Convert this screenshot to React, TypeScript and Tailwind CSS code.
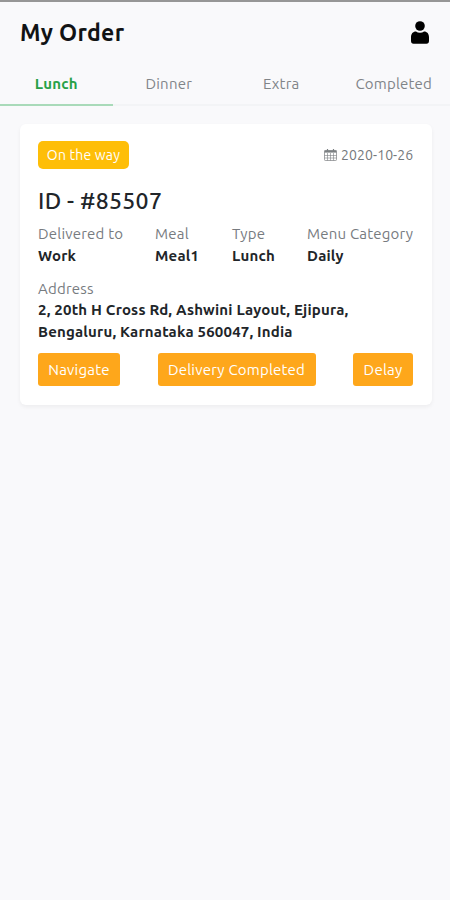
import { clsx } from 'clsx';

const tabs = ['Lunch', 'Dinner', 'Extra', 'Completed'];

const details = [
  { label: 'Delivered to', value: 'Work' },
  { label: 'Meal', value: 'Meal1' },
  { label: 'Type', value: 'Lunch' },
  { label: 'Menu Category', value: 'Daily' },
];

function PersonIcon() {
  return (
    <svg className="mb-px h-[23px] w-[18px]" viewBox="0 0 18 23" fill="#000" aria-hidden="true">
      <circle cx="9" cy="5" r="4.800" />
      <path d="M5 10.600C1.800 10.600 0 13 0 16.200v3.600c0 1.900.8 2.900 2.600 2.900h12.800c1.800 0 2.600-1 2.600-2.900v-3.600c0-3.200-1.800-5.600-5-5.600-1.100.8-2.400 1.200-4 1.200s-2.900-.4-4-1.200z" />
    </svg>
  );
}

function CalendarIcon() {
  return (
    <svg className="h-3 w-[13px]" viewBox="0 0 13 12" fill="none" stroke="#7c8083" aria-hidden="true">
      <rect x=".5" y="1.500" width="12" height="10" rx=".8" strokeWidth=".7" />
      <path d="M.5 2.500h12" strokeWidth="2.200" />
      <path d="M3.500 0v2.500M9.500 0v2.500" strokeWidth="1.200" />
      <path d="M.5 6.500h12M.5 9h12M3.500 4v7.500M6.500 4v7.500M9.500 4v7.500" strokeWidth=".6" />
    </svg>
  );
}

function ActionButton({ label, className }: { label: string; className: string }) {
  return (
    <button
      type="button"
      className={clsx('h-[33px] rounded-[3px] bg-[#fea71b] pt-0.5 text-center tracking-[0.2px] whitespace-nowrap text-white', className)}
    >
      {label}
    </button>
  );
}

function OrderCard() {
  return (
    <article className="mr-[18px] ml-5 h-[281px] rounded-md bg-white pt-[17px] pr-[19px] pl-[18px] shadow-[0_2px_4px_rgba(0,0,0,0.05)]">
      <div className="flex h-7 items-center justify-between">
        <span className="flex h-7 w-[91px] items-center justify-center rounded-[5px] bg-[#febe08] text-[14px] text-white">
          On the way
        </span>
        <span className="flex items-center gap-1 text-[14px] text-[#75797c]">
          <CalendarIcon />
          <time className="w-[72px] tracking-[0.1px] whitespace-nowrap">2020-10-26</time>
        </span>
      </div>

      <h2 className="mt-[18px] text-[23px] leading-7 font-medium tracking-[0.3px] text-[#212529]">ID - #85507</h2>

      <div className="mt-[8px] grid grid-cols-[117px_77px_75px_106px] leading-[22px]">
        {details.map((item) => (
          <div key={item.label}>
            <p className="whitespace-nowrap text-[#777b7f]">{item.label}</p>
            <p className="font-bold text-[#212529]">{item.value}</p>
          </div>
        ))}
      </div>

      <div className="mt-[11px]">
        <p className="leading-[21px] text-[#777b7f]">Address</p>
        <p className="leading-[22px] font-bold whitespace-nowrap text-[#212529]">
          2, 20th H Cross Rd, Ashwini Layout, Ejipura,
          <br />
          Bengaluru, Karnataka 560047, India
        </p>
      </div>

      <div className="mt-[10px] flex justify-between">
        <ActionButton label="Navigate" className="w-[82px]" />
        <ActionButton label="Delivery Completed" className="w-[158px]" />
        <ActionButton label="Delay" className="w-[60px]" />
      </div>
    </article>
  );
}

export default function App() {
  return (
    <div className="min-h-screen border-t-2 border-[#969696] bg-[#f9f9fb] font-['Ubuntu','Noto_Sans',sans-serif] text-[15px] tracking-[0.2px]">
      <header className="flex h-[62px] items-center justify-between pr-[21px] pl-5">
        <h1 className="text-[23px] leading-7 font-semibold tracking-[0.3px] text-[#111315]">My Order</h1>
        <PersonIcon />
      </header>

      <nav className="mb-[18px] grid h-[42px] grid-cols-4">
        {tabs.map((tab, index) => (
          <button
            key={tab}
            type="button"
            className={clsx(
              'border-b-2 tracking-[0.2px]',
              index === 0 ? 'border-[#a9dab9] font-bold text-[#27a148]' : 'border-[#f3f4f6] text-[#808488]',
            )}
          >
            {tab}
          </button>
        ))}
      </nav>

      <OrderCard />
    </div>
  );
}
